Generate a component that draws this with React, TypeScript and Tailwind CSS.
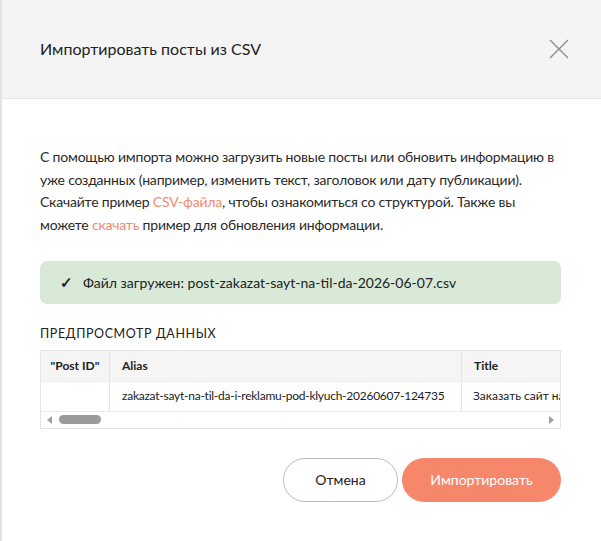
import React from 'react';

export default function App() {
  return (
    <div className="relative w-[601px] h-[541px] overflow-hidden bg-white text-[#222] font-['Lato','Noto_Sans',sans-serif]">
      <div className="absolute inset-0 flex flex-col border-l-2 border-[#e2e2e2] bg-white">
        <div className="flex items-center justify-between h-[99px] pl-[38px] pr-[30px] bg-[#f4f4f4] border-b border-[#e6e6e6]">
          <h1 className="text-[16px]">Импортировать посты из CSV</h1>
          <button className="w-6 h-6 flex items-center justify-center text-[#8a8a8a]">
            <svg width="20" height="20" viewBox="0 0 20 20" fill="none" stroke="currentColor" strokeWidth="1.3">
              <path d="M1 1 L19 19 M19 1 L1 19" />
            </svg>
          </button>
        </div>

        <div className="pl-[38px] pr-[40px] pt-[47px]">
          <p className="text-[14px] leading-[22.5px] tracking-[-0.2px] text-[#2a2a2a] whitespace-nowrap">
            С помощью импорта можно загрузить новые посты или обновить информацию в
            <br />
            уже созданных (например, изменить текст, заголовок или дату публикации).
            <br />
            Скачайте пример <span className="text-[#f08a6f]">CSV-файла</span>, чтобы ознакомиться со структурой. Также вы
            <br />
            можете <span className="text-[#f08a6f]">скачать</span> пример для обновления информации.
          </p>

          <div className="mt-[25px] flex items-center gap-[10px] h-[43px] px-[20px] rounded-[7px] bg-[#d8e9d8] text-[14px]">
            <span className="text-[15px] font-bold">✓</span>
            <span>Файл загружен: post-zakazat-sayt-na-til-da-2026-06-07.csv</span>
          </div>

          <div className="mt-[21px] text-[12.5px] tracking-[0.6px] uppercase">Предпросмотр данных</div>

          <div className="mt-[6px] border border-[#e4e4e4] text-[12px]">
            <div className="flex h-[31px] bg-[#f5f5f5] font-bold border-b border-[#ececec]">
              <div className="w-[69px] shrink-0 flex items-center justify-center border-r border-[#e4e4e4]">"Post ID"</div>
              <div className="w-[352px] shrink-0 flex items-center pl-[12px] border-r border-[#e4e4e4]">Alias</div>
              <div className="flex-1 flex items-center pl-[12px]">Title</div>
            </div>
            <div className="flex h-[30px] border-b border-[#ececec] whitespace-nowrap">
              <div className="w-[69px] shrink-0 border-r border-[#e4e4e4]" />
              <div className="w-[352px] shrink-0 flex items-center pl-[12px] tracking-[-0.25px] border-r border-[#e4e4e4]">
                zakazat-sayt-na-til-da-i-reklamu-pod-klyuch-20260607-124735
              </div>
              <div className="flex-1 min-w-0 flex items-center pl-[11px] overflow-hidden">Заказать сайт на Тильде</div>
            </div>
            <div className="flex items-center h-[16px] px-[6px] bg-white">
              <svg width="6" height="8" viewBox="0 0 6 8" className="text-[#a0a0a0]">
                <path d="M5 0 L0 4 L5 8 Z" fill="currentColor" />
              </svg>
              <div className="ml-[6px] w-[42px] h-[9px] rounded-full bg-[#9a9a9a]" />
              <div className="flex-1" />
              <svg width="6" height="8" viewBox="0 0 6 8" className="text-[#a0a0a0]">
                <path d="M1 0 L6 4 L1 8 Z" fill="currentColor" />
              </svg>
            </div>
          </div>

          <div className="mt-[29px] flex justify-end gap-[4px]">
            <button className="w-[115px] h-[44px] rounded-full border border-[#bdbdbd] bg-white text-[14px]">Отмена</button>
            <button className="w-[159px] h-[44px] rounded-full bg-[#f6876b] text-white text-[14px]">Импортировать</button>
          </div>
        </div>
      </div>
    </div>
  );
}
